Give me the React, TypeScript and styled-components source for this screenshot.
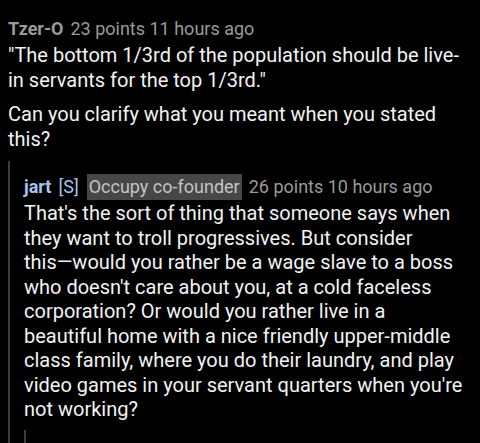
import React from 'react';
import styled, { createGlobalStyle } from 'styled-components';

const GlobalStyle = createGlobalStyle`
  html, body {
    margin: 0;
    padding: 0;
    background: #000;
  }
  body {
    font-family: Roboto, 'Noto Sans', sans-serif;
    -webkit-font-smoothing: antialiased;
  }
`;

const Page = styled.div`
  width: 480px;
  height: 443px;
  overflow: hidden;
  background: #000;
  padding: 17px 15px 0 8px;
  box-sizing: border-box;
`;

const Comment = styled.div`
  color: #f0f0f0;
`;

const Meta = styled.div`
  font-size: 18px;
  line-height: 24px;
  color: #9a9a9a;
  white-space: nowrap;
  margin-bottom: 2px;
`;

const Author = styled.span<{ $op?: boolean }>`
  font-weight: bold;
  color: ${(p) => (p.$op ? '#a9c3ec' : '#9a9a9a')};
  margin-right: 7px;
`;

const Tag = styled.span`
  color: #a9c3ec;
  margin-right: 8px;
`;

const Flair = styled.span`
  background: #474747;
  color: #c4c4c4;
  padding: 2px 2px 3px;
  margin-right: 7px;
`;

const Body = styled.div`
  font-size: 20px;
  line-height: 24.5px;
  color: #f2f2f2;
`;

const Para = styled.p`
  margin: 0 0 10px;
`;

const NoBreak = styled.span`
  white-space: nowrap;
`;

const Children = styled.div`
  border-left: 2px solid #3c3c3c;
  padding: 14px 0 0 14px;
`;

const Nested = styled.div`
  margin-top: 8px;
  border-left: 2px solid #3c3c3c;
  height: 40px;
`;

export default function App() {
  return (
    <>
      <GlobalStyle />
      <Page>
        <Comment>
          <Meta>
            <Author>Tzer-O</Author>23 points 11 hours ago
          </Meta>
          <Body>
            <Para>"The bottom 1/3rd of the population should be live-in servants for the top 1/3rd."</Para>
            <Para>Can you clarify what you meant when you stated this?</Para>
          </Body>
          <Children>
            <Comment>
              <Meta>
                <Author $op>jart</Author>
                <Tag>[S]</Tag>
                <Flair>Occupy co-founder</Flair>26 points 10 hours ago
              </Meta>
              <Body>
                That's the sort of thing that someone says when they want to troll progressives. But consider{' '}
                <NoBreak>this—would</NoBreak> you rather be a wage slave to a boss who doesn't care about you, at a
                cold faceless corporation? Or would you rather live in a beautiful home with a nice friendly
                upper-middle class family, where you do their laundry, and play video games in your servant
                quarters when you're not working?
              </Body>
              <Nested />
            </Comment>
          </Children>
        </Comment>
      </Page>
    </>
  );
}
